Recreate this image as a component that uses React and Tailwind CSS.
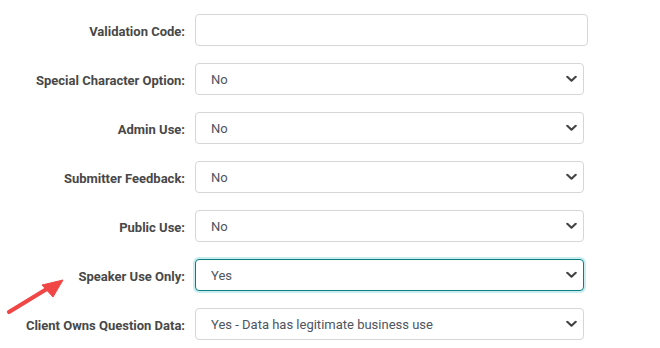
import React from "react";

const Chevron = () => (
  <svg width="11" height="7" viewBox="0 0 11 7" className="absolute right-[6px] top-1/2 -translate-y-1/2">
    <path d="M1.3 1.3 L5.5 5.2 L9.7 1.3" fill="none" stroke="#444" strokeWidth="2.2" strokeLinecap="round" strokeLinejoin="round" />
  </svg>
);

function Row({ label, children }) {
  return (
    <div className="flex items-center h-8">
      <div className="w-[185px] pt-[3px] text-right text-[13px] font-bold text-[#484848] whitespace-nowrap">{label}</div>
      <div className="ml-[10px]">{children}</div>
    </div>
  );
}

function Select({ value, focus }) {
  return (
    <div
      className={
        "relative w-[389px] h-8 rounded-[4px] bg-white flex items-center pl-[15px] pt-[1px] text-[13px] text-[#4d5560] " +
        (focus
          ? "border border-[#0e7c80] shadow-[0_0_0_2px_#c9eef0]"
          : "border border-[#d6d6d6]")
      }
    >
      {value}
      <Chevron />
    </div>
  );
}

export default function App() {
  return (
    <div className="relative w-[660px] h-[348px] bg-white overflow-hidden" style={{ fontFamily: "Roboto, 'Liberation Sans', sans-serif" }}>
      <div className="flex flex-col gap-[17px] pt-[14px]">
        <Row label="Validation Code:">
          <div className="w-[393px] h-8 rounded-[4px] border border-[#d6d6d6] bg-white" />
        </Row>
        <Row label="Special Character Option:">
          <Select value="No" />
        </Row>
        <Row label="Admin Use:">
          <Select value="No" />
        </Row>
        <Row label="Submitter Feedback:">
          <Select value="No" />
        </Row>
        <Row label="Public Use:">
          <Select value="No" />
        </Row>
        <Row label="Speaker Use Only:">
          <Select value="Yes" focus />
        </Row>
        <Row label="Client Owns Question Data:">
          <Select value="Yes - Data has legitimate business use" />
        </Row>
      </div>
      <svg className="absolute left-0 top-[265px]" width="80" height="60" viewBox="0 265 80 60">
        <line x1="9" y1="312" x2="50" y2="287" stroke="#f04646" strokeWidth="4.2" strokeLinecap="round" />
        <polygon points="63,280 42,285 53,297" fill="#f04646" stroke="#f04646" strokeWidth="1" strokeLinejoin="round" />
      </svg>
    </div>
  );
}
